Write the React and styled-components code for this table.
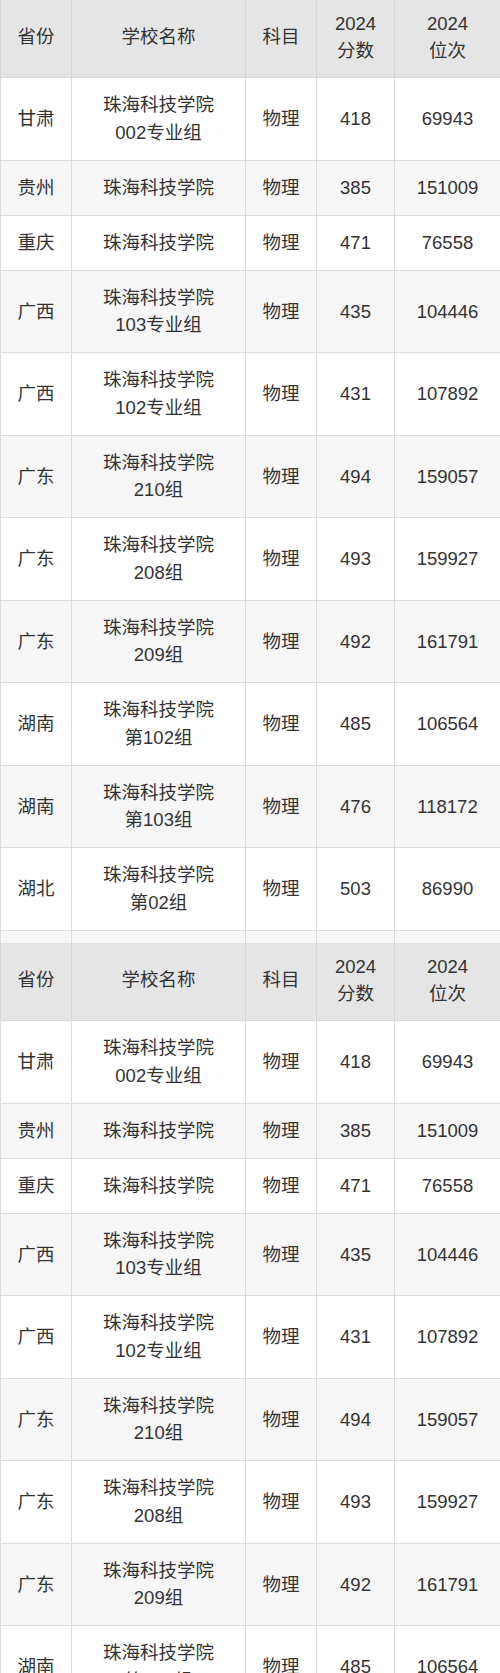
import React from 'react';
import styled, { createGlobalStyle } from 'styled-components';

const GlobalStyle = createGlobalStyle`
  html, body {
    margin: 0;
    padding: 0;
    background: #ffffff;
  }
  body {
    font-family: 'Liberation Sans', 'Noto Sans CJK SC', sans-serif;
    color: #333333;
  }
`;

// first screenshot ends on a row that is cut off before its text shows
const rows = [
  ['甘肃', ['珠海科技学院', '002专业组'], '物理', '418', '69943'],
  ['贵州', ['珠海科技学院'], '物理', '385', '151009'],
  ['重庆', ['珠海科技学院'], '物理', '471', '76558'],
  ['广西', ['珠海科技学院', '103专业组'], '物理', '435', '104446'],
  ['广西', ['珠海科技学院', '102专业组'], '物理', '431', '107892'],
  ['广东', ['珠海科技学院', '210组'], '物理', '494', '159057'],
  ['广东', ['珠海科技学院', '208组'], '物理', '493', '159927'],
  ['广东', ['珠海科技学院', '209组'], '物理', '492', '161791'],
  ['湖南', ['珠海科技学院', '第102组'], '物理', '485', '106564'],
  ['湖南', ['珠海科技学院', '第103组'], '物理', '476', '118172'],
  ['湖北', ['珠海科技学院', '第02组'], '物理', '503', '86990'],
];

const Page = styled.div`
  width: 500px;
  display: flex;
  flex-direction: column;
`;

const Shot = styled.div`
  height: ${p => p.$height}px;
  overflow: hidden;
`;

const Table = styled.table`
  width: 500px;
  border-collapse: collapse;
  table-layout: fixed;
  font-size: 18.5px;
  line-height: 27.5px;
`;

const Head = styled.th`
  background: #e5e5e5;
  font-weight: 400;
  text-align: center;
  padding: 9.5px 0 12.5px;
  border: 1px solid #d6d6d6;
  border-top: none;
`;

const Cell = styled.td`
  background: ${p => (p.$striped ? '#f6f6f6' : '#ffffff')};
  text-align: center;
  padding: 13.25px 0;
  border: 1px solid #dcdcdc;
`;

const Line = styled.div`
  white-space: nowrap;
`;

const widths = [71, 174, 71, 78, 106];

function DataTable({ data, tail }) {
  return (
    <Table>
      <colgroup>
        {widths.map((w, i) => (
          <col key={i} style={{ width: w }} />
        ))}
      </colgroup>
      <thead>
        <tr>
          <Head>省份</Head>
          <Head>学校名称</Head>
          <Head>科目</Head>
          <Head>
            <Line>2024</Line>
            <Line>分数</Line>
          </Head>
          <Head>
            <Line>2024</Line>
            <Line>位次</Line>
          </Head>
        </tr>
      </thead>
      <tbody>
        {data.map((r, i) => (
          <tr key={i}>
            <Cell $striped={i % 2 === 1}>{r[0]}</Cell>
            <Cell $striped={i % 2 === 1}>
              {r[1].map((t, j) => (
                <Line key={j}>{t}</Line>
              ))}
            </Cell>
            <Cell $striped={i % 2 === 1}>{r[2]}</Cell>
            <Cell $striped={i % 2 === 1}>{r[3]}</Cell>
            <Cell $striped={i % 2 === 1}>{r[4]}</Cell>
          </tr>
        ))}
        {tail && (
          <tr>
            {widths.map((w, i) => (
              <Cell key={i} $striped={data.length % 2 === 1}>&nbsp;</Cell>
            ))}
          </tr>
        )}
      </tbody>
    </Table>
  );
}

export default function App() {
  return (
    <Page>
      <GlobalStyle />
      <Shot $height={943}>
        <DataTable data={rows} tail />
      </Shot>
      <Shot $height={730}>
        <DataTable data={rows} />
      </Shot>
    </Page>
  );
}
